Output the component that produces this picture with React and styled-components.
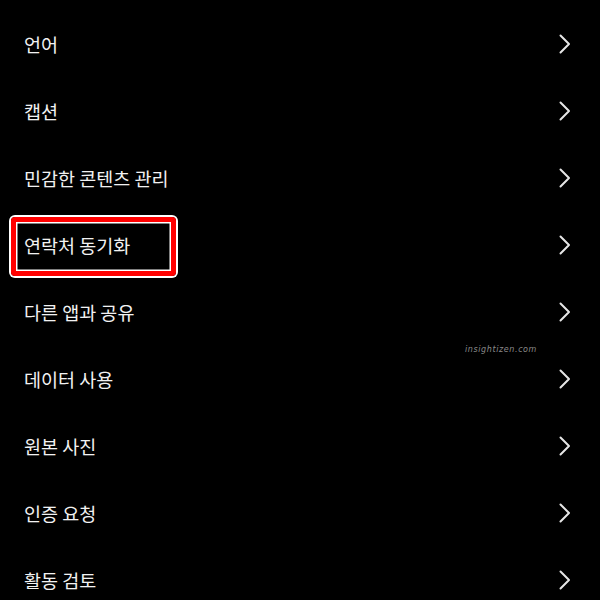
import React from "react";
import styled, { createGlobalStyle } from "styled-components";

const GlobalStyle = createGlobalStyle`
    html, body {
        margin: 0;
        padding: 0;
        background: #000;
    }
`;

const Screen = styled.div`
    position: relative;
    width: 600px;
    height: 600px;
    overflow: hidden;
    background: #000;
    padding-top: 10px;
    box-sizing: border-box;
    font-family: "Noto Sans CJK KR", "Noto Sans", sans-serif;
`;

const List = styled.ul`
    list-style: none;
    margin: 0;
    padding: 0;
`;

const Row = styled.li`
    position: relative;
    height: 67px;
    padding: 0 29px 0 24px;
    display: flex;
    align-items: center;
    justify-content: space-between;
`;

const Label = styled.span`
    color: #f2f2f2;
    font-size: 18.5px;
`;

// red annotation box drawn over the row
const Highlight = styled.div`
    position: absolute;
    left: 11px;
    top: 6px;
    width: 155px;
    height: 49px;
    border: 5px solid #ff0000;
    border-radius: 4px;
    box-shadow: 0 0 0 2px #ffffff, inset 0 0 0 1.5px #ffffff;
    pointer-events: none;
`;

const Watermark = styled.div`
    position: absolute;
    left: 465px;
    top: 345px;
    color: #8a8a8a;
    font-family: "DejaVu Sans", sans-serif;
    font-size: 8px;
    font-style: italic;
    letter-spacing: 0.6px;
`;

const Chevron = () => (
    <svg width="12" height="20" viewBox="0 0 12 20">
        <path
            d="M1.5 1.5 L10 10 L1.5 18.5"
            fill="none"
            stroke="#e6e6e6"
            strokeWidth="2"
            strokeLinecap="round"
            strokeLinejoin="round"
        />
    </svg>
);

const items = [
    "언어",
    "캡션",
    "민감한 콘텐츠 관리",
    "연락처 동기화",
    "다른 앱과 공유",
    "데이터 사용",
    "원본 사진",
    "인증 요청",
    "활동 검토",
];

function App() {
    return (
        <>
            <GlobalStyle />
            <Screen>
                <List>
                    {items.map((item) => (
                        <Row key={item}>
                            {item === "연락처 동기화" && <Highlight />}
                            <Label>{item}</Label>
                            <Chevron />
                        </Row>
                    ))}
                </List>
                <Watermark>insightizen.com</Watermark>
            </Screen>
        </>
    );
}

export default App;
